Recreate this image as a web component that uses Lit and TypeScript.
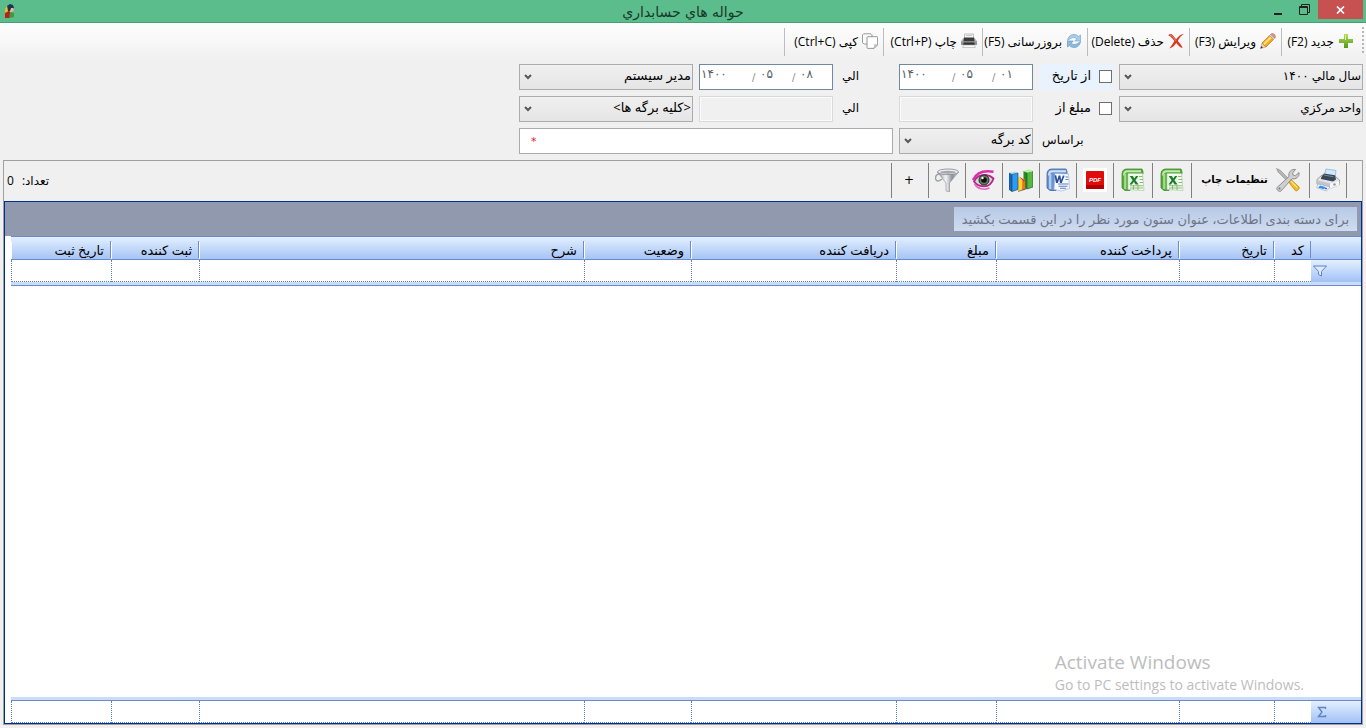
import { LitElement, html, css, svg, nothing } from "lit";
import { customElement, state } from "lit/decorators.js";

const icons: Record<string, unknown> = {
  add: svg`<svg class="i16" viewBox="0 0 16 16"><defs><linearGradient id="g1" x1="0" y1="0" x2="0" y2="1"><stop offset="0" stop-color="#b5dc63"/><stop offset="1" stop-color="#4f9a12"/></linearGradient></defs><path d="M6 1h4v5h5v4h-5v5H6v-5H1V6h5z" fill="url(#g1)"/><path d="M7 2h1v5H2V7h5z" fill="#d6efa0"/></svg>`,
  edit: svg`<svg class="i16" viewBox="0 0 16 16"><path d="M.5 15.500l1.500-5.500 4 4z" fill="#ecd2ae" stroke="#a98a5c" stroke-width=".5"/><path d="M.5 15.500l.7-2.400 1.700 1.700z" fill="#333"/><path d="M2 10L9.500 2.500l4 4L6 14z" fill="#f6a81c"/><path d="M3 10.800l7.500-7.500 1.400 1.400-7.500 7.500z" fill="#ffdf87"/><path d="M2 10L9.500 2.500l4 4L6 14z" fill="none" stroke="#b9791a" stroke-width=".7"/><path d="M9.500 2.500l1.300-1.300 4 4-1.300 1.300z" fill="#d3d6da" stroke="#8d9097" stroke-width=".5"/><path d="M10.800 1.200l.9-.7c2-.4 3.900 1.400 3.800 3.600l-.7 1.100z" fill="#e88f80" stroke="#b56a5c" stroke-width=".5"/></svg>`,
  del: svg`<svg class="i16" viewBox="0 0 16 16"><path d="M.2 2.300C2.300.3 3.800 1 5.200 2.800L8.100 6.200C10 3.700 12.500 1.700 15.900.8 13 3 11.200 5.200 9.800 7.900c2 2.200 3.700 4 4.900 6.900-2.900-.2-4.300-2.300-6.500-4.900C6.900 12 5 14.300 1.300 15.600 3.400 13 5 10.400 6.400 8 4.500 5.700 2.900 3.400.2 2.300z" fill="#d6391f"/><path d="M2 2c1.700.2 2.900 2 6 5.800" stroke="#f08a72" fill="none"/></svg>`,
  refresh: svg`<svg class="i16" viewBox="0 0 16 16"><path d="M1.500 7.500C2 3.500 5 1.500 8 1.500c2 0 3.500.8 4.500 2L14.500 2v6H8.800l2-2.200C8.800 3.500 5 4.500 1.500 7.500z" fill="#a9cdea" stroke="#79a6cc" stroke-width=".7"/><path d="M14.500 8.500c-.5 4-3.500 6-6.500 6-2 0-3.500-.8-4.500-2L1.500 14V8h5.700l-2 2.200c2 2.300 5.800 1.300 9.300-1.700z" fill="#8db9de" stroke="#6c9bc6" stroke-width=".7"/></svg>`,
  print: svg`<svg class="i16" viewBox="0 0 16 16"><path d="M3.500 1h9v5h-9z" fill="#f4f4f4" stroke="#a9a9a9" stroke-width=".7"/><path d="M5 2.500h6" stroke="#aaa" stroke-width=".6"/><path d="M0 8l2.500-3h11L16 8v4H0z" fill="#b8b8b8"/><path d="M3 4.500h10l.6 4H2.400z" fill="#3b3b3b"/><path d="M0 8.500h16V12H0z" fill="#929292"/><path d="M2.500 9.500h11V12h-11z" fill="#333"/><path d="M2.500 12h11l.8 2.500H1.700z" fill="#fafafa" stroke="#aaa" stroke-width=".6"/></svg>`,
  copy: svg`<svg class="i16" viewBox="0 0 16 16"><path d="M1.500.8h7.500l1 1V11H2.500l-2-1.200V1.800z" fill="#fbfbfb" stroke="#909090" stroke-width=".9"/><path d="M5.800 3.700H15a.6.6 0 0 1 .6.6v7.500L12 15.400H5.800a.8.8 0 0 1-.8-.8V4.500a.8.8 0 0 1 .8-.8z" fill="#fff" stroke="#8b8b8b" stroke-width=".9"/><path d="M15.500 11.800c-1.300.2-2.200.1-3-.2.300 1.400 0 2.600-.6 3.700z" fill="#ddd" stroke="#999" stroke-width=".6"/></svg>`,
  printer: svg`<svg class="i24" viewBox="0 0 24 24"><path d="M8 9L10 1l10 1.500-1 8z" fill="#cfe8fd" stroke="#7eaed6" stroke-width=".7"/><path d="M1 11.500L6 7l14 2 3.500 3-.5 5-8 3L1 16z" fill="#e4e4e8" stroke="#8a8a92" stroke-width=".8"/><path d="M5 9.500l3-4 11 1.800 1 4.200-3 2L5 11z" fill="#3a4756"/><path d="M8 7l9.500 1.800" stroke="#7d8fa3" stroke-width=".9"/><path d="M1.500 12.200L14 15.500v4L1.500 16z" fill="#c2c3cb"/><path d="M14 15.500l9-2.500v4.500L14 20.500z" fill="#f6f6f8"/><circle cx="18.500" cy="16.500" r="1.300" fill="#9a9aa6"/><path d="M2.500 16l11.500 3-3.500 4L.5 19.500z" fill="#fff" stroke="#8aa5c4" stroke-width=".6"/><path d="M4 17.500l5.500 1.500-1.500 2.300-6-1.800z" fill="#3a8ee0"/><path d="M9.500 19.500l2 .5-1.200 1.500-1.800-.5z" fill="#2b62c0"/></svg>`,
  tools: svg`<svg class="i24" viewBox="0 0 24 24"><path d="M.5.500L4 2l10 10-2 2L2 4z" fill="#b4b4b4" stroke="#7f7f7f" stroke-width=".5"/><path d="M12.500 14l2.500-2.500 8 7.500c1.300 1.200-2 4.800-3.600 3.600z" fill="#f4b81d" stroke="#c28c10" stroke-width=".8"/><path d="M15 13.300l6.500 6.500" stroke="#ffe38a" stroke-width="1.300"/><path d="M1 19.500L13 8.500C12 4.500 15 .8 19.500 1.500l-3 3.500.7 2.200 2.300.5L23 4.500c.7 4.200-3 7.300-7 6.200L5 23c-2.200 1.200-5-1.300-4-3.500z" fill="#cfcfcf" stroke="#858585" stroke-width=".9"/><circle cx="3.500" cy="20.500" r="1" fill="#777"/></svg>`,
  excel: svg`<svg class="i24" viewBox="0 0 24 24"><path d="M1 6C1 2.500 3 1 6 1h15l1 2.500V6H9v16.500H4L1 20z" fill="#57a83e" stroke="#3f8e2f" stroke-width=".8"/><path d="M3 7.500c0-3 1-4.300 3.500-4.300H20" fill="none" stroke="#c3ebae" stroke-width="2"/><path d="M4.200 6v15" stroke="#a4dc8d" stroke-width="2.200"/><path d="M7 5.500h14.500L23 22.500 7 21.500z" fill="#f8fdf6" stroke="#a3cc96" stroke-width=".7"/><path d="M18 8.500h3.500M18.500 11.500h3.500M18.500 14.500h3.500M9 17.800h13M9 20h13M12.500 17v4.500M17 17v5" stroke="#79b567" stroke-width=".9"/><path d="M8 7.500h9.500v9H8z" fill="#e4f4de"/><path d="M8.800 8h3l1.500 2.400L15 8h2.300l-2.900 4.200 3.200 4.300h-3l-1.700-2.700-2 2.700H8.500l3.100-4.300z" fill="#1f7a2d"/></svg>`,
  pdf: svg`<svg class="i24" viewBox="0 0 24 24"><path d="M0 0h24v24H0z" fill="#fff"/><rect x="3" y="3" width="18" height="18" rx="1" fill="#e00b0b"/><path d="M3 17h18v3q0 1-1 1H4q-1 0-1-1z" fill="#b30000"/><text x="12" y="14" text-anchor="middle" font-size="6" font-weight="700" font-style="italic" font-family="Liberation Sans, sans-serif" fill="#fff">PDF</text></svg>`,
  word: svg`<svg class="i24" viewBox="0 0 24 24"><path d="M1 6C1 2.500 3 1 6 1h14l1 2.500V6H10v16.500H4L1 20z" fill="#6b93cf" stroke="#3f659f" stroke-width=".8"/><path d="M3 7.500c0-3 1-4.300 3.500-4.300H20" fill="none" stroke="#cfe2fa" stroke-width="2"/><path d="M4.200 6v15" stroke="#b3cff2" stroke-width="2.200"/><path d="M9 5.500L22.500 6l1 14.500-8 2.500L8 21.500z" fill="#f7faff" stroke="#9fb6dc" stroke-width=".7"/><path d="M19.500 9H22M19.500 11.500h2.800M12 16h10.500M12.500 18.200h9M14 20.300h6" stroke="#5f80bd" stroke-width="1.100"/><path d="M8.500 7.500l1.700-.2 1 4.700 1.500-4.600 1.700.1.800 4.600 1.700-4.500 1.700.1-2.900 7.300h-1.700l-.7-4.300-1.500 4.300H10z" fill="#2b4e9b"/></svg>`,
  chart: svg`<svg class="i24" viewBox="0 0 24 24"><path d="M0 5l3 1.500V23.500L0 21.500z" fill="#1668c2"/><path d="M3 6.500L9 5v16.500l-6 2z" fill="#2f9cf2"/><path d="M0 5l6-1.500L9 5 3 6.500z" fill="#a5d8ff"/><path d="M9 9l4.500 3v10L9 23.500z" fill="#ffd52e"/><path d="M10 8.500l6.500 4V21l-3 1v-9.500z" fill="#e23a12"/><path d="M13.500 14l3.500-1.500V21l-3.500 1.500z" fill="#f4701d"/><path d="M14.500 3l3.500 1.500v16l-2-.5v-8l-1.500-1z" fill="#2a8a1c"/><path d="M18 4.500L24 3v16l-6 2z" fill="#55b93d"/><path d="M14.500 3L20 1.200 24 3l-6 1.500z" fill="#b5f09a"/><path d="M0 5l3 1.500V23.500L0 21.500zM3 6.500L9 5v16.500l-6 2M18 4.500V21l6-2V3M9 23.500l9-3" fill="none" stroke="#173f52" stroke-width=".6"/></svg>`,
  eye: svg`<svg class="i24" viewBox="0 0 24 24"><path d="M2 13.500C4.500 8.500 9 6.500 14 7c4 .5 6 2 7.500 3.500-1.500 5-5 8-10 7.800-4-.2-7.500-1.800-9.500-4.800z" fill="#d5d6dc" stroke="#b3288a" stroke-width="1.800"/><path d="M1 12C4 5.500 11 2 21.500 3.800" fill="none" stroke="#dd2ea8" stroke-width="2.400"/><path d="M2.500 16c3 5 9.500 6.500 15 4" fill="none" stroke="#e46ac2" stroke-width="1.600"/><circle cx="12" cy="12" r="5" fill="#667a59" stroke="#26302a"/><circle cx="12" cy="12" r="2.800" fill="#0d100d"/><circle cx="10.500" cy="10" r="1.200" fill="#fff"/></svg>`,
  filter: svg`<svg class="i24" viewBox="0 0 24 24"><defs><linearGradient id="g2"><stop offset="0" stop-color="#83858d"/><stop offset=".4" stop-color="#f6f6f8"/><stop offset=".7" stop-color="#8e9098"/><stop offset="1" stop-color="#d2d3da"/></linearGradient></defs><path d="M4 6C1 6.500-.2 9.500.8 11.500S4 13.500 7 11" fill="none" stroke="#9ea0a8" stroke-width="1.500"/><path d="M2.500 4l8.500 11v8l3.500.8V15L23.500 4z" fill="url(#g2)" stroke="#898b94" stroke-width=".6"/><ellipse cx="13" cy="3.800" rx="10.500" ry="2.800" fill="#eceef2" stroke="#84868e" stroke-width=".8"/><ellipse cx="13" cy="4.200" rx="7.800" ry="1.500" fill="#a5a7af"/></svg>`,
};

const actions = [
  { id: "add", label: "جدید (F2)", w: 81 },
  { id: "edit", label: "ویرایش (F3)", w: 92 },
  { id: "del", label: "حذف (Delete)", w: 102 },
  { id: "refresh", label: "بروزرسانی (F5)", w: 105 },
  { id: "print", label: "چاپ (Ctrl+P)", w: 99 },
  { id: "copy", label: "کپی (Ctrl+C)", w: 99 },
];

const tools = [
  { icon: "printer", name: "چاپ" },
  { icon: "tools", name: "تنظیمات چاپ", text: "تنظیمات چاپ", cls: "text" },
  { icon: "excel", name: "Excel", cls: "wide" },
  { icon: "excel", name: "Excel", cls: "wide" },
  { icon: "pdf", name: "PDF" },
  { icon: "word", name: "Word" },
  { icon: "chart", name: "نمودار" },
  { icon: "eye", name: "نمایش" },
  { icon: "filter", name: "فیلتر" },
];

const columns = ["کد", "تاریخ", "پرداخت کننده", "مبلغ", "دریافت کننده", "وضعیت", "شرح", "ثبت کننده", "تاریخ ثبت"];

@customElement("date-box")
class DateBox extends LitElement {
  static properties = { year: {}, month: {}, day: {}, label: {} };
  declare year: string;
  declare month: string;
  declare day: string;
  declare label: string;

  static styles = css`
    :host { display: block; }
    .box {
      display: flex; direction: ltr; box-sizing: border-box; height: 26px;
      padding: 0 16px 0 1px; background: #fff; border: 1px solid #7088a0;
    }
    input {
      border: 0; padding: 0; margin: 0; background: none; outline: none; height: 17px;
      font: 12px "DejaVu Sans", sans-serif; color: #5a5e64; min-width: 0;
    }
    .year { flex: 1; }
    .part { width: 32px; }
    .day { width: 16px; }
    .slash { font: 10px/26px "DejaVu Sans", sans-serif; color: #8a8a8a; width: 8px; }
  `;

  render() {
    return html`<div class="box" role="group" aria-label=${this.label}>
      <input class="year" aria-label="سال" .value=${this.year} />
      <span class="slash">/</span>
      <input class="part" aria-label="ماه" .value=${this.month} />
      <span class="slash">/</span>
      <input class="day" aria-label="روز" .value=${this.day} />
    </div>`;
  }
}

@customElement("app-root")
class AppRoot extends LitElement {
  @state() count = 0;

  static styles = css`
    :host {
      display: flex; flex-direction: column; box-sizing: border-box; height: 100vh;
      direction: rtl; background: #f0f0f0; color: #000; overflow: hidden; position: relative;
      font: 12px "Open Sans", "DejaVu Sans", sans-serif;
    }
    button, select, input { font: inherit; color: inherit; margin: 0; }
    button { border: 0; background: none; padding: 0; }
    .i16 { width: 16px; height: 16px; flex: none; }
    .i24 { width: 24px; height: 24px; flex: none; }

    .title {
      display: grid; grid-template-columns: 1fr auto 1fr; height: 22px; flex: none;
      background: #5bbd8b; border-bottom: 1px solid #45a075; direction: ltr;
    }
    .title h1 { margin: 0; font: 14px/24px "DejaVu Sans", sans-serif; color: #17382a; direction: rtl; }
    .logo { width: 12px; height: 14px; margin: 4px 0 0 4px; }
    .winbtns { display: flex; justify-content: flex-end; padding-right: 3px; }
    .winbtns button { width: 26px; height: 19px; display: grid; place-items: center; }
    .winbtns .close { width: 45px; background: #c75050; }

    .bar {
      display: flex; height: 36px; flex: none; box-sizing: border-box; padding-right: 2px;
      background: linear-gradient(#fdfdfd, #f8f8f8 50%, #f0f0f0);
    }
    .grip {
      width: 2px; margin: 4px 0 6px; flex: none;
      background: repeating-linear-gradient(#b8b8b8 0 2px, transparent 2px 4px);
    }
    .bar button {
      display: flex; align-items: center; gap: 4px; box-sizing: border-box; height: 28px;
      margin-top: 5px; padding: 0 5px 2px 0; border-left: 1px solid #bdbdbd; white-space: nowrap;
    }
    .bar .add { padding-right: 8px; }

    .filters {
      display: grid; grid-template-columns: 244px 74px 134px 54px 134px 174px;
      grid-auto-rows: 26px; gap: 6px; padding: 5px 3px 6px; flex: none; font-size: 13px;
    }
    select {
      appearance: none; width: 100%; height: 26px; border: 1px solid #acacac; border-radius: 0;
      padding: 0 1px 4px 20px; color: #000; outline: none;
      background:
        url("data:image/svg+xml,%3Csvg xmlns='http://www.w3.org/2000/svg' width='8' height='6'%3E%3Cpath d='M1 1l3 3 3-3' fill='none' stroke='%23585858' stroke-width='2'/%3E%3C/svg%3E") no-repeat 4px 9px,
        linear-gradient(#f0f0f0, #e5e5e5);
    }
    .main { font-size: 12px; }
    .check { display: flex; align-items: center; gap: 8px; padding: 0 1px 2px 0; }
    .check.hot { background: #e8f3ff; }
    .check label, .lbl { line-height: 22px; padding-bottom: 2px; }
    .lbl { font-size: 12px; }
    .check input {
      appearance: none; width: 13px; height: 13px; border: 1px solid #707070; background: #fff; flex: none;
    }
    .lbl { text-align: left; padding-left: 3px; line-height: 24px; }
    .amount, .search { box-sizing: border-box; width: 100%; height: 26px; border: 1px solid #d9d9d9; outline: none; }
    .amount { background: #f0f0f0; box-shadow: inset 0 0 0 1px #fbfbfb; }
    .base { grid-column: 2; }
    .wide3 { grid-column: span 3; }
    .search {
      border-color: #ababab; background: #fff; direction: ltr; padding: 0 11px; color: #e8113d;
      font: 11px "DejaVu Sans", sans-serif;
    }

    .panel {
      flex: 1; min-height: 0; display: flex; flex-direction: column; margin: 0 3px 3px;
      border: 1px solid #a0a0a0;
    }
    .tools { display: flex; height: 40px; flex: none; padding-right: 15px; box-sizing: border-box; }
    .tools button {
      box-sizing: border-box; width: 37px; height: 35px; margin-top: 2px; display: flex; padding: 0 0 2px 1px;
      align-items: center; justify-content: center; gap: 8px; border-right: 1px solid #808080;
    }
    .tools button { padding: 0 1px 2px 0; }
    .tools .text { width: 118px; font: bold 10px "DejaVu Sans", sans-serif; white-space: nowrap; padding: 0 0 2px; }
    .tools .wide { width: 39px; }
    .tools .plus { border-left: 1px solid #808080; width: 38px; font: 12px "DejaVu Sans", sans-serif; padding-right: 2px; }
    .count { margin: 0 auto 0 3px; line-height: 40px; display: flex; gap: 8px; }

    .grid {
      flex: 1; min-height: 0; display: flex; flex-direction: column; background: #fff;
      border: 1px solid #002d96; font-size: 13px;
    }
    .group { height: 34px; flex: none; box-sizing: border-box; padding: 5px 4px; background: #9199af; display: flex; }
    .group span {
      height: 24px; line-height: 24px; padding: 0 8px; color: #6d7585; white-space: nowrap;
      background: linear-gradient(#b7c9e6, #cfdcf0);
    }
    table {
      border-collapse: separate; border-spacing: 0; table-layout: fixed; width: calc(100% - 6px);
      margin-left: 6px; align-self: flex-start; flex: none;
    }
    .body { flex: 1; }
    th {
      height: 24px; line-height: 18px; box-sizing: border-box; border: solid #6a8ccb; border-width: 1px 0;
      padding: 3px 7px 0; font-weight: 400; text-align: right; white-space: nowrap;
      background:
        linear-gradient(#6a8ccb, #6a8ccb) no-repeat right 0 top 4px / 1px 17px,
        linear-gradient(#fff, #fff) no-repeat left 0 top 5px / 1px 17px,
        linear-gradient(#e3efff, #c4dafa 50%, #a6c3f6);
    }
    th:first-child { background: linear-gradient(#e3efff, #c4dafa 50%, #a6c3f6); }
    td {
      box-sizing: border-box; height: 22px; padding: 0; border-left: 1px dotted #5f83c8;
      border-bottom: 1px dotted #5f83c8;
    }
    td.mark {
      background: linear-gradient(#e3efff, #c4dafa 50%, #a6c3f6); border-left: 0;
      border-bottom: 1px solid #a6c3f6;
    }
    td.mark svg { display: block; margin: 0 auto 0 2px; }
    .mark svg { margin-right: 35px; }
    .rule { height: 3px; flex: none; background: #c9dcf8; border-bottom: 1px solid #6a8ccb; margin-left: 6px; }
    .c0 { width: 50px; } .c1 { width: 37px; } .c2 { width: 95px; } .c3 { width: 183px; } .c4 { width: 100px; }
    .c5 { width: 205px; } .c6 { width: 107px; } .c8 { width: 88px; } .c9 { width: 100px; }

    .activate {
      position: absolute; right: 62px; bottom: 33px; direction: ltr; pointer-events: none;
      color: #bdbdbd; text-align: left; font-family: "Open Sans", sans-serif;
    }
    .activate strong { display: block; font-weight: 400; font-size: 19px; line-height: 26px; }
    .activate span { font-size: 14px; line-height: 20px; }
  `;

  private cols() {
    return html`<colgroup>${["c0", "c1", "c2", "c3", "c4", "c5", "c6", "c7", "c8", "c9"].map((c) => html`<col class=${c} />`)}</colgroup>`;
  }

  render() {
    return html`
      <header class="title">
        <svg class="logo" viewBox="0 0 12 14"><path d="M3 2l3-2 3 1 1 3-3 2-3 2z" fill="#26304f"/><path d="M3 2L1 5v5l3-2z" fill="#e8c11c"/><path d="M7 4h2l1 2-2 2H6z" fill="#e8b9a6"/><path d="M1 9l4-2 3 3-2 4H1z" fill="#c31a1a"/><path d="M6 8l4 1v4l-5 1z" fill="#3d9a35"/></svg>
        <h1>حواله هاي حسابداري</h1>
        <div class="winbtns">
          <button aria-label="کوچک"><svg width="10" height="12"><path d="M0 10h8" stroke="#222" stroke-width="2"/></svg></button>
          <button aria-label="اندازه"><svg width="13" height="11"><path d="M.5 2.500h8v8h-8zM.5 3.500h8M2.500 2V.5h8v8H9" fill="none" stroke="#222"/></svg></button>
          <button class="close" aria-label="بستن"><svg width="9" height="8"><path d="M1 .5l7 7M8 .5l-7 7" stroke="#fff" stroke-width="1.700"/></svg></button>
        </div>
      </header>

      <nav class="bar">
        <span class="grip"></span>
        ${actions.map((a) => html`<button class=${a.id} style="width:${a.w}px">${icons[a.id]}<span>${a.label}</span></button>`)}
      </nav>

      <form class="filters" @submit=${(e: Event) => e.preventDefault()}>
        <select class="main" aria-label="سال مالي"><option>سال مالي ۱۴۰۰</option></select>
        <div class="check hot"><input type="checkbox" id="byDate" /><label for="byDate">از تاریخ</label></div>
        <date-box label="از تاریخ" year="۱۴۰۰" month="۰۵" day="۰۱"></date-box>
        <span class="lbl">الي</span>
        <date-box label="الي تاریخ" year="۱۴۰۰" month="۰۵" day="۰۸"></date-box>
        <select aria-label="کاربر"><option>مدیر سیستم</option></select>

        <select class="main" aria-label="واحد"><option>واحد مرکزي</option></select>
        <div class="check"><input type="checkbox" id="byAmount" /><label for="byAmount">مبلغ از</label></div>
        <input class="amount" aria-label="مبلغ از" disabled />
        <label class="lbl" for="amountTo">الي</label>
        <input class="amount" id="amountTo" disabled />
        <select aria-label="برگه ها"><option>&lt;کلیه برگه ها&gt;</option></select>

        <label class="lbl base" for="basis">براساس</label>
        <select id="basis"><option>کد برگه</option></select>
        <div class="wide3"><input class="search" aria-label="جستجو" .value=${"*"} /></div>
      </form>

      <main class="panel">
        <div class="tools">
          ${tools.map((t) => html`<button class=${t.cls ?? ""} aria-label=${t.name}>${icons[t.icon]}${t.text ? html`<span>${t.text}</span>` : nothing}</button>`)}
          <button class="plus">+</button>
          <div class="count"><span>تعداد:</span><span>${this.count}</span></div>
        </div>
        <section class="grid">
          <div class="group"><span>برای دسته بندی اطلاعات، عنوان ستون مورد نظر را در این قسمت بکشید</span></div>
          <table>
            ${this.cols()}
            <thead><tr><th></th>${columns.map((c) => html`<th>${c}</th>`)}</tr></thead>
            <tbody><tr>
              <td class="mark"><svg width="14" height="12"><path d="M.500 1h13L8.500 6.500V11l-3-1.500v-3z" fill="#dfe9fa" stroke="#5f83c8"/></svg></td>
              ${columns.map(() => html`<td></td>`)}
            </tr></tbody>
          </table>
          <div class="rule"></div>
          <div class="body"></div>
          <div class="rule"></div>
          <table>
            ${this.cols()}
            <tbody><tr>
              <td class="mark"><svg width="14" height="12"><path d="M12.500 3V1.500h-7L9 6l-3.500 4.500h7V9" fill="none" stroke="#5f83c8" stroke-width="1.400"/></svg></td>
              ${columns.map(() => html`<td></td>`)}
            </tr></tbody>
          </table>
        </section>
      </main>

      <aside class="activate"><strong>Activate Windows</strong><span>Go to PC settings to activate Windows.</span></aside>
    `;
  }
}
